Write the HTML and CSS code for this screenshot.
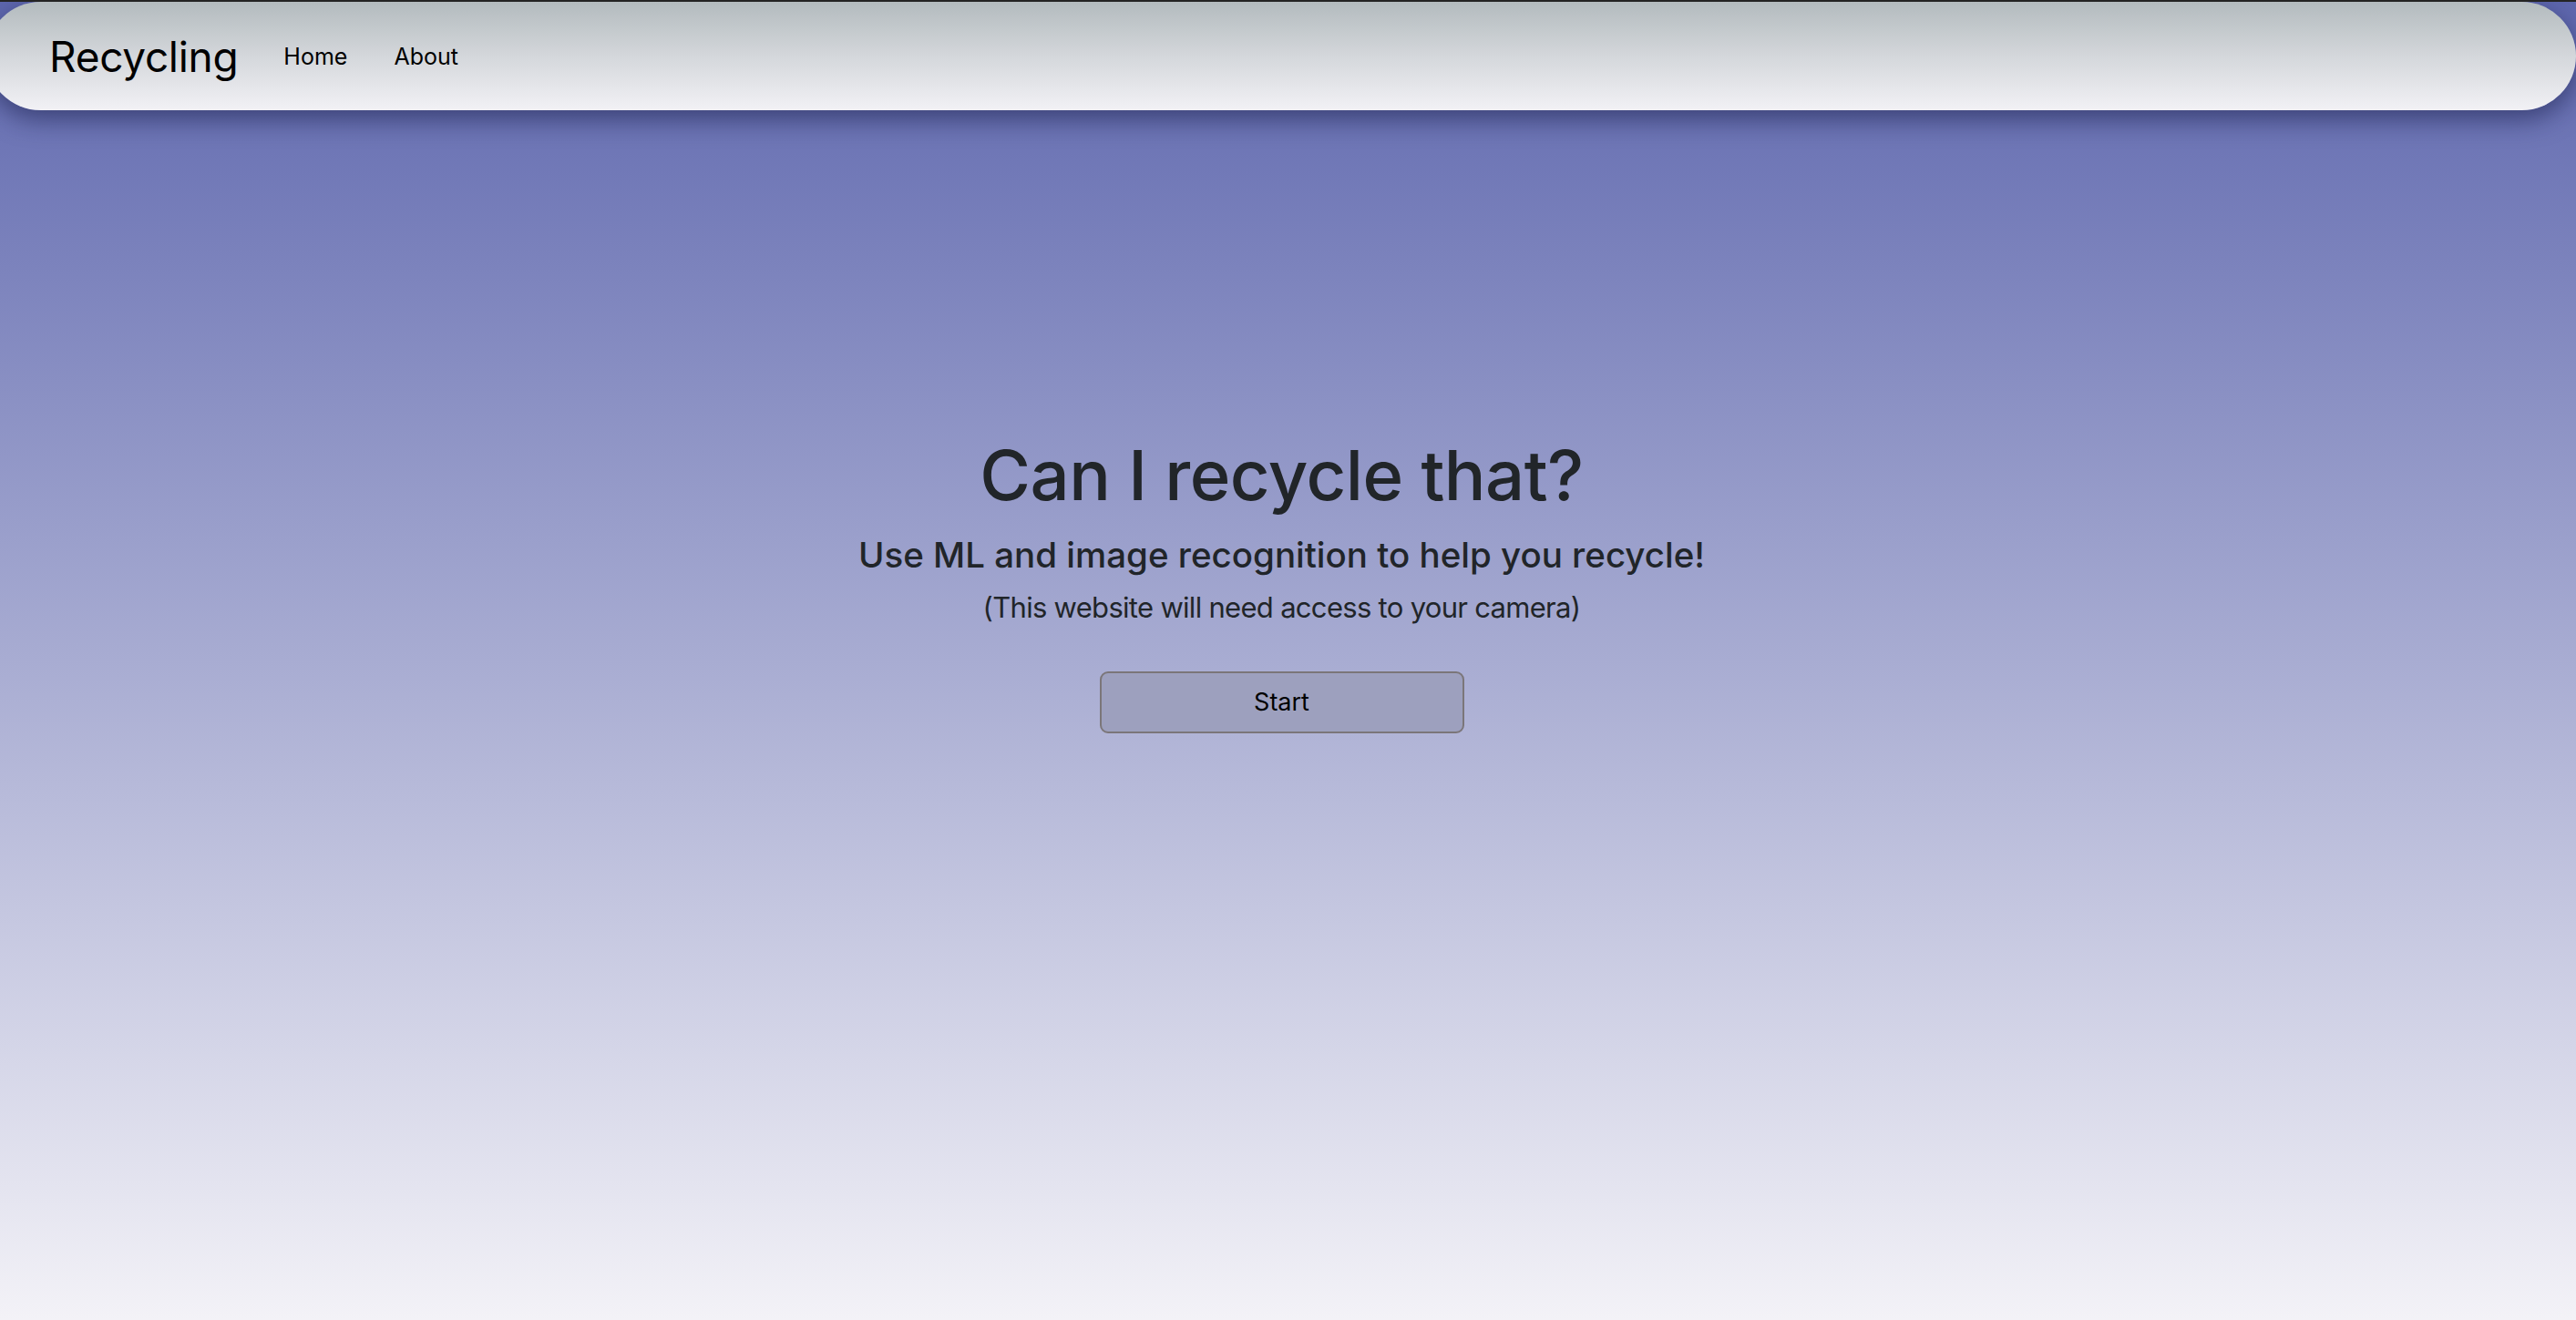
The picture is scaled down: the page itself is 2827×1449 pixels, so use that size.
FILE: index.html
```html
<!DOCTYPE html>
<html lang="en">
<head>
<meta charset="utf-8">
<title>Recycling</title>
<link rel="stylesheet" href="styles.css">
</head>
<body>
<nav class="navbar">
  <a class="brand" href="#">Recycling</a>
  <ul class="nav-links">
    <li><a href="#">Home</a></li>
    <li><a href="#">About</a></li>
  </ul>
</nav>
<main class="hero">
  <h1 class="title">Can I recycle that?</h1>
  <h2 class="subtitle">Use ML and image recognition to help you recycle!</h2>
  <p class="note">(This website will need access to your camera)</p>
  <button class="start-btn" type="button">Start</button>
</main>
</body>
</html>
```
FILE: styles.css
```css
html, body {
  margin: 0;
  padding: 0;
  height: 100%;
}
body {
  font-family: Inter, "Noto Sans", "Liberation Sans", sans-serif;
  color: #212529;
  background: linear-gradient(180deg, #5e67ae 0%, #a8acd2 50%, #f3f2f7 100%);
  border-top: 2px solid #242424;
  box-sizing: border-box;
  min-height: 100vh;
  overflow: hidden;
}
.navbar {
  display: flex;
  align-items: center;
  height: 119px;
  margin-left: -15px;
  padding: 0 54px 0 69px;
  border-radius: 60px;
  background: linear-gradient(180deg, #b3bbbe 0%, #d4d7db 50%, #f2f1f5 100%);
  box-shadow: 0 10px 28px rgba(20, 25, 70, 0.55);
}
.brand {
  font-size: 46px;
  color: #000;
  text-decoration: none;
  margin-right: 50px;
  letter-spacing: -0.3px;
}
.nav-links {
  display: flex;
  gap: 51px;
  list-style: none;
  margin: 0;
  padding: 0;
}
.nav-links a {
  font-size: 25px;
  color: #000;
  text-decoration: none;
}
.hero {
  display: flex;
  flex-direction: column;
  align-items: center;
  padding: 355px 14px 0 0;
}
.title {
  margin: 0;
  font-size: 76px;
  font-weight: 500;
  line-height: 1.2;
  letter-spacing: -0.5px;
}
.subtitle {
  margin: 19px 0 0;
  font-size: 38.5px;
  font-weight: 500;
  line-height: 1.2;
}
.note {
  margin: 16px 0 0;
  font-size: 31px;
  line-height: 1.2;
  letter-spacing: -0.7px;
}
.start-btn {
  margin-top: 51px;
  width: 400px;
  height: 68px;
  background: #9da0be;
  border: 2px solid #7b7679;
  border-radius: 9px;
  font-family: inherit;
  font-size: 27px;
  color: #000;
}
```
